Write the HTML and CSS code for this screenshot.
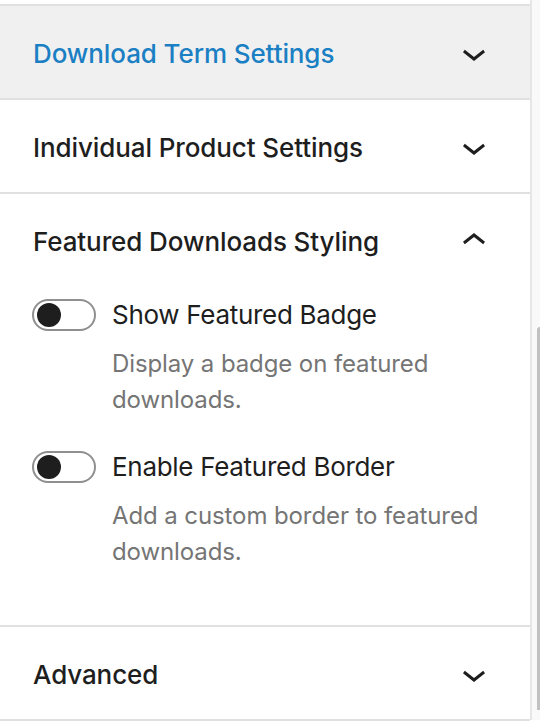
FILE: index.html
```html
<!DOCTYPE html>
<html lang="en">
<head>
<meta charset="utf-8">
<title>Block settings</title>
<link rel="stylesheet" href="styles.css">
</head>
<body>
<div class="frame">
  <div class="sidebar">
    <div class="top-gap"></div>
    <div class="panel-body">
      <div class="panel-header active">
        <span class="panel-title">Download Term Settings</span>
        <svg class="chev" viewBox="0 0 24 24" width="48" height="48"><path d="M17.5 11.6L12 16l-5.5-4.4.9-1.2L12 14l4.6-3.6z"/></svg>
      </div>
    </div>
    <div class="panel-body">
      <div class="panel-header">
        <span class="panel-title">Individual Product Settings</span>
        <svg class="chev" viewBox="0 0 24 24" width="48" height="48"><path d="M17.5 11.6L12 16l-5.5-4.4.9-1.2L12 14l4.6-3.6z"/></svg>
      </div>
    </div>
    <div class="panel-body open">
      <div class="panel-header">
        <span class="panel-title">Featured Downloads Styling</span>
        <svg class="chev" viewBox="0 0 24 24" width="48" height="48"><path d="M6.5 12.4L12 8l5.5 4.4-.9 1.2L12 10l-4.6 3.6-.9-1.2z"/></svg>
      </div>
      <div class="panel-content">
        <div class="toggle-control">
          <div class="toggle-row">
            <span class="toggle"><span class="knob"></span></span>
            <span class="toggle-label">Show Featured Badge</span>
          </div>
          <p class="help">Display a badge on featured downloads.</p>
        </div>
        <div class="toggle-control">
          <div class="toggle-row">
            <span class="toggle"><span class="knob"></span></span>
            <span class="toggle-label">Enable Featured Border</span>
          </div>
          <p class="help">Add a custom border to featured downloads.</p>
        </div>
      </div>
    </div>
    <div class="panel-body">
      <div class="panel-header">
        <span class="panel-title">Advanced</span>
        <svg class="chev" viewBox="0 0 24 24" width="48" height="48"><path d="M17.5 11.6L12 16l-5.5-4.4.9-1.2L12 14l4.6-3.6z"/></svg>
      </div>
    </div>
  </div>
  <div class="scrollbar">
    <div class="thumb"></div>
  </div>
</div>
</body>
</html>
```
FILE: styles.css
```css
* { box-sizing: border-box; }
html, body { margin: 0; padding: 0; }
body {
  background: #ffffff;
  font-family: Inter, "Noto Sans", "Liberation Sans", sans-serif;
  color: #1e1e1e;
  width: 540px;
  height: 724px;
  overflow: hidden;
}
.frame {
  display: flex;
  height: 724px;
}
.sidebar {
  width: 532px;
  border-right: 2px solid #e6e6e6;
  background: #ffffff;
  height: 720px;
}
.top-gap { height: 4px; }
.panel-body {
  border-top: 2px solid #e0e0e0;
}
.panel-body:last-child {
  border-bottom: 2px solid #e0e0e0;
}
.panel-header {
  display: flex;
  align-items: center;
  justify-content: space-between;
  height: 92px;
  padding: 3px 32px 0 33px;
}
.panel-header.active { background: #f0f0f0; }
.panel-header.active .panel-title { color: #1a7fc3; }
.panel-title {
  font-size: 26px;
  font-weight: 500;
  line-height: 28px;
  letter-spacing: -0.1px;
}
.chev {
  display: block;
  fill: #1e1e1e;
  margin-top: -2px;
}
.panel-content {
  padding: 11px 32px 55px 32px;
}
.toggle-control + .toggle-control { margin-top: 31px; }
.toggle-row {
  display: flex;
  align-items: center;
  gap: 16px;
}
.toggle {
  display: flex;
  align-items: center;
  width: 64px;
  height: 32px;
  border: 2px solid #8f8f8f;
  border-radius: 16px;
  padding-left: 3px;
  flex: none;
}
.knob {
  display: block;
  width: 24px;
  height: 24px;
  border-radius: 50%;
  background: #1e1e1e;
}
.toggle-label {
  font-size: 26px;
  line-height: 36px;
  letter-spacing: -0.3px;
}
.help {
  margin: 13px 0 0 80px;
  font-size: 24px;
  line-height: 36px;
  color: #757575;
  letter-spacing: -0.1px;
}
.scrollbar {
  width: 8px;
  background: #f9f9f9;
  padding-top: 327px;
  padding-left: 5px;
  height: 720px;
}
.thumb {
  width: 3px;
  height: 383px;
  background: #c1c1c1;
  border-radius: 3px 0 0 0;
}
```
